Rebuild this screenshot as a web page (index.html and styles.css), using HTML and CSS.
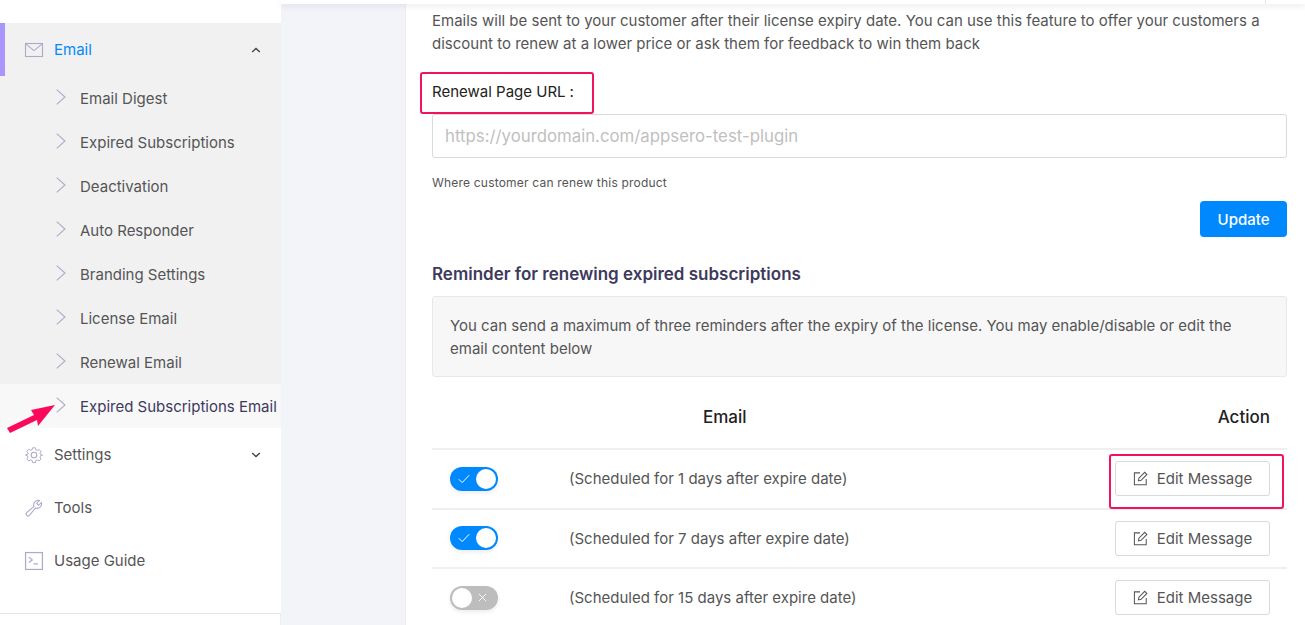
FILE: index.html
```html
<!DOCTYPE html>
<html lang="en">
<head>
<meta charset="utf-8">
<title>Expired Subscriptions Email</title>
<link rel="stylesheet" href="styles.css">
</head>
<body>
<div class="app">
  <aside class="sidebar">
    <nav class="menu">
      <a class="item open">
        <svg class="ico" viewBox="0 0 18 14"><rect x=".5" y=".5" width="17" height="13"/><path d="M.8 .8 9 7.6 17.2 .8"/></svg>
        <span class="label">Email</span>
        <svg class="caret" viewBox="0 0 10 6"><path d="M1.2 5 5 1.4 8.800 5"/></svg>
      </a>
      <a class="sub"><svg class="chev" viewBox="0 0 10 16"><path d="M.7 .7 9 8 .7 15.3"/></svg><span>Email Digest</span></a>
      <a class="sub"><svg class="chev" viewBox="0 0 10 16"><path d="M.7 .7 9 8 .7 15.3"/></svg><span>Expired Subscriptions</span></a>
      <a class="sub"><svg class="chev" viewBox="0 0 10 16"><path d="M.7 .7 9 8 .7 15.3"/></svg><span>Deactivation</span></a>
      <a class="sub"><svg class="chev" viewBox="0 0 10 16"><path d="M.7 .7 9 8 .7 15.3"/></svg><span>Auto Responder</span></a>
      <a class="sub"><svg class="chev" viewBox="0 0 10 16"><path d="M.7 .7 9 8 .7 15.3"/></svg><span>Branding Settings</span></a>
      <a class="sub"><svg class="chev" viewBox="0 0 10 16"><path d="M.7 .7 9 8 .7 15.3"/></svg><span>License Email</span></a>
      <a class="sub"><svg class="chev" viewBox="0 0 10 16"><path d="M.7 .7 9 8 .7 15.3"/></svg><span>Renewal Email</span></a>
      <a class="sub active"><svg class="chev" viewBox="0 0 10 16"><path d="M.7 .7 9 8 .7 15.3"/></svg><span>Expired Subscriptions Email</span></a>
      <a class="item">
        <svg class="ico" viewBox="0 0 18 18"><path d="M7.4 1h3.2l.5 2.3 1.5.7 2.1-1.200 2.200 2.300-1.200 2 .6 1.500 2.200.6v0l-2.200.6-.6 1.600 1.200 2-2.200 2.200-2.100-1.200-1.500.7-.5 2.300H7.400l-.5-2.300-1.500-.7-2.100 1.200-2.200-2.200 1.200-2-.6-1.600L-.5 9l2.200-.6.6-1.500-1.200-2 2.200-2.300 2.100 1.200 1.500-.7z" transform="translate(.9 .9) scale(.9)"/><circle cx="9" cy="9" r="2.800"/></svg>
        <span class="label">Settings</span>
        <svg class="caret" viewBox="0 0 10 6"><path d="M1.200 1 5 4.600 8.800 1"/></svg>
      </a>
      <a class="item">
        <svg class="ico" viewBox="0 0 18 18"><path d="M16.400 3.600 13.600 6.300 11.700 4.400 14.400 1.600A4.400 4.400 0 0 0 9 7.400L1.700 13.600a1.900 1.900 0 0 0 2.700 2.700L10.600 9A4.400 4.400 0 0 0 16.400 3.600z"/></svg>
        <span class="label">Tools</span>
      </a>
      <a class="item">
        <svg class="ico" viewBox="0 0 16 16"><rect x=".5" y=".5" width="15" height="15"/><path d="M3.500 4.600 6.400 7 3.500 9.400M7.500 10.500h4"/></svg>
        <span class="label">Usage Guide</span>
      </a>
    </nav>
    <div class="side-foot"></div>
  </aside>

  <div class="gutter"></div>

  <main class="panel">
    <p class="intro">Emails will be sent to your customer after their license expiry date. You can use this feature to offer your customers a discount to renew at a lower price or ask them for feedback to win them back</p>

    <label class="field-label"><span class="mark-label">Renewal Page URL</span><span class="colon">:</span></label>
    <div class="input">https://yourdomain.com/appsero-test-plugin</div>
    <p class="help">Where customer can renew this product</p>
    <div class="actions"><button class="btn-primary">Update</button></div>

    <h3 class="heading">Reminder for renewing expired subscriptions</h3>
    <div class="notice">You can send a maximum of three reminders after the expiry of the license. You may enable/disable or edit the email content below</div>

    <div class="table">
      <div class="row head">
        <span></span><span class="th-email">Email</span><span class="th-action">Action</span>
      </div>
      <div class="row">
        <span class="toggle on"><svg viewBox="0 0 12 10"><path d="M.8 5.200 4.200 8.600 11.200 1.200"/></svg><i></i></span>
        <span class="sched">(Scheduled for 1 days after expire date)</span>
        <span class="cell-action"><button class="btn-edit flagged"><svg viewBox="0 0 16 16"><path d="M7.500 2H1.500v12.600h12.600V8.500"/><path d="M5.800 10.600 6.300 7.700 12.500 1.400 14.800 3.700 8.600 10z"/></svg>Edit Message</button></span>
      </div>
      <div class="row">
        <span class="toggle on"><svg viewBox="0 0 12 10"><path d="M.8 5.200 4.200 8.600 11.200 1.200"/></svg><i></i></span>
        <span class="sched">(Scheduled for 7 days after expire date)</span>
        <span class="cell-action"><button class="btn-edit"><svg viewBox="0 0 16 16"><path d="M7.500 2H1.500v12.600h12.600V8.500"/><path d="M5.800 10.600 6.300 7.700 12.500 1.400 14.800 3.700 8.600 10z"/></svg>Edit Message</button></span>
      </div>
      <div class="row">
        <span class="toggle"><i></i><svg viewBox="0 0 10 10"><path d="M1 1l8 8M9 1 1 9"/></svg></span>
        <span class="sched">(Scheduled for 15 days after expire date)</span>
        <span class="cell-action"><button class="btn-edit"><svg viewBox="0 0 16 16"><path d="M7.500 2H1.500v12.600h12.600V8.500"/><path d="M5.800 10.600 6.300 7.700 12.500 1.400 14.800 3.700 8.600 10z"/></svg>Edit Message</button></span>
      </div>
    </div>
  </main>
</div>
<div class="topbar"><span class="topbar-tick"></span></div>
<svg class="arrow" viewBox="0 0 50 40"><path d="M50 5 26 10 29 15 2 28 5 33 32 20 33 26z"/></svg>
</body>
</html>
```
FILE: styles.css
```css
* { box-sizing: border-box; }
html, body { margin: 0; height: 625px; overflow: hidden; }
body { font-family: Inter, "Liberation Sans", sans-serif; color: #555; background: #f3f4f9; position: relative; }
p { margin: 0; }

.app { display: flex; height: 625px; }

.sidebar { width: 281px; flex: none; background: #fff; display: flex; flex-direction: column; padding-top: 23px; }
.menu { flex: none; height: 590px; }
.item { display: flex; align-items: center; height: 53px; padding: 0 20px 0 25px; font-size: 15px; color: #555; position: relative; }
.item.open { background: #f1f1f2; color: #0089ff; }
.item.open::before { content: ""; position: absolute; left: 0; top: 0; bottom: 0; width: 5px; background: #a995fb; }
.ico { width: 18px; height: 18px; flex: none; fill: none; stroke: #aeaaca; stroke-width: 1.1; margin-right: 11px; overflow: visible; }
.label { flex: 1; }
.caret { width: 10px; height: 6px; fill: none; stroke: #444; stroke-width: 1.4; }
.sub { display: flex; align-items: center; height: 44px; padding-left: 56px; background: #f1f1f2; font-size: 15px; color: #555; white-space: nowrap; }
.sub span { margin-left: 14px; }
.chev { width: 10px; height: 16px; flex: none; fill: none; stroke: #aeaaca; stroke-width: 1.1; position: relative; top: -1px; }
.sub.active { background: #f8f8f9; color: #3d3a5c; }
.side-foot { height: 12px; border-top: 1px solid #e4e4e6; border-right: 1px solid #eee; flex: none; }

.gutter { width: 124px; flex: none; background: #f3f4f9; }

.panel { flex: 1; min-width: 0; background: #fff; border-left: 1px solid #eceef3; padding: 9px 18px 0 26px; font-size: 15px; }
.intro { line-height: 23px; color: #555; }
.field-label { display: flex; margin-top: 25px; height: 23px; line-height: 23px; color: #222; }
.colon { margin-left: 4px; }
.input { margin-top: 11px; height: 44px; border: 1px solid #d9d9d9; border-radius: 3px; padding: 0 12px; line-height: 42px; font-size: 16.800px; color: #bfbfbf; }
.help { margin-top: 17px; font-size: 12px; line-height: 16px; color: #555; letter-spacing: .2px; }
.actions { display: flex; justify-content: flex-end; margin-top: 10px; }
.btn-primary { width: 87px; height: 36px; border: 0; border-radius: 4px; background: #0089ff; color: #fff; font: 500 15px Inter, sans-serif; }
.heading { margin: 26px 0 0; font-size: 17px; font-weight: 600; line-height: 22px; color: #3d3a5c; }
.notice { margin-top: 11px; height: 81px; background: #f7f7f7; border: 1px solid #e8e8e8; border-radius: 3px; padding: 17px 17px; line-height: 23px; color: #555; }
.table { margin-top: 9px; }
.row { display: grid; grid-template-columns: 119px 1fr 160px; align-items: center; height: 59.500px; border-top: 2px solid #eeeef3; padding: 0 17px 0 18px; }
.row.head { height: 62px; border-top: 0; font-size: 17px; font-weight: 500; color: #222; }
.th-email { padding-left: 134px; }
.th-action { text-align: right; }
.sched { color: #555; }
.cell-action { display: flex; justify-content: flex-end; }
.toggle { display: flex; align-items: center; width: 48px; height: 24px; border-radius: 12px; background: #bdbdbd; padding: 2px; box-shadow: 0 2px 4px rgba(0,0,0,.08); }
.toggle.on { background: #0089ff; justify-content: flex-end; }
.toggle i { width: 20px; height: 20px; border-radius: 50%; background: #fff; flex: none; }
.toggle svg { fill: none; stroke: #fff; stroke-width: 1; flex: none; }
.toggle.on svg { width: 12px; height: 10px; margin-right: 6px; }
.toggle:not(.on) svg { width: 9px; height: 9px; margin-left: 6px; }
.btn-edit { display: flex; align-items: center; justify-content: center; width: 155px; height: 35px; background: #fff; border: 1px solid #d9d9d9; border-radius: 3px; color: #555; font: 15px Inter, sans-serif; white-space: nowrap; position: relative; }
.btn-edit svg { width: 15px; height: 15px; margin-right: 9px; fill: none; stroke: #555; stroke-width: 1.1; flex: none; }

.topbar { position: absolute; left: 281px; right: 0; top: 0; height: 4px; background: #fff; box-shadow: 0 2px 6px rgba(0,0,0,.1); }
.topbar-tick { position: absolute; left: 984px; top: 0; width: 1px; height: 4px; background: #e4e4e6; }

.mark-label { position: relative; }
.mark-label::after { content: ""; position: absolute; left: -12px; top: -8px; width: 170px; height: 38px; border: 2px solid #f0145f; border-radius: 3px; pointer-events: none; }
.flagged::after { content: ""; position: absolute; left: -7px; top: -8px; width: 171px; height: 51px; border: 2px solid #f0145f; border-radius: 3px; pointer-events: none; }

.arrow { position: absolute; left: 5px; top: 400px; width: 50px; height: 40px; fill: #fb0a5b; }
```
